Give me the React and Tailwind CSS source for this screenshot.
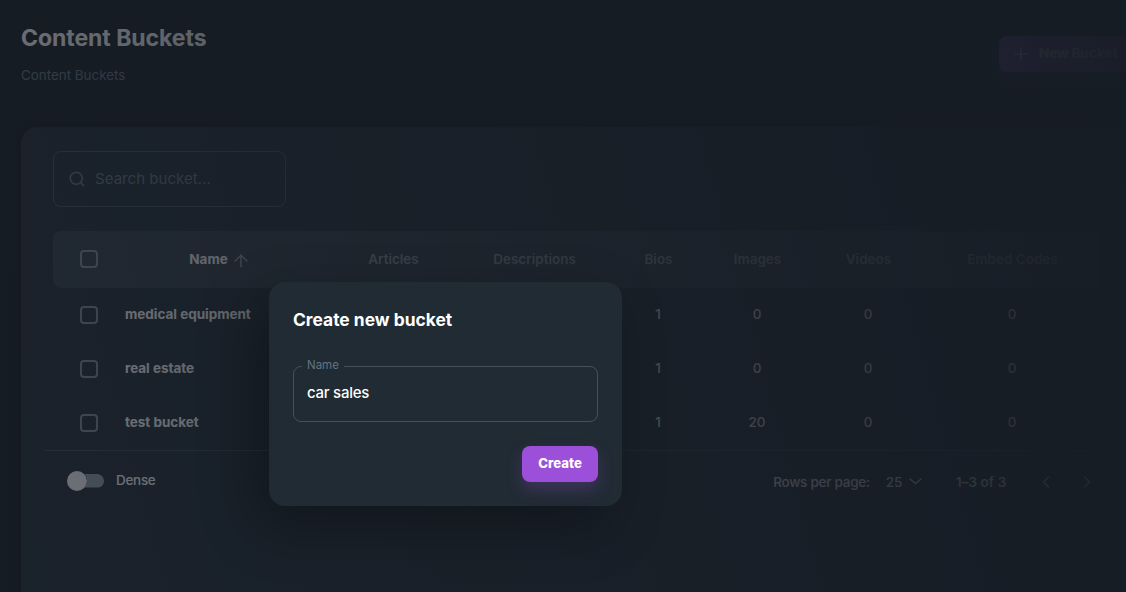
import { ArrowUp, ChevronLeft, ChevronRight, Plus, Search } from "lucide-react";

const columns = ["Articles", "Descriptions", "Bios", "Images", "Videos", "Embed Codes"];

const rows = [
  { name: "medical equipment", counts: [null, null, 1, 0, 0, 0] },
  { name: "real estate", counts: [null, null, 1, 0, 0, 0] },
  { name: "test bucket", counts: [null, null, 1, 20, 0, 0] },
];

const gridCols = "grid grid-cols-[56px_218px_132px_150px_98px_100px_122px_166px] items-center";

function Checkbox() {
  return <span className="block size-[18px] rounded-[4px] border-2 border-[#919eab]/85" />;
}

function PageHeader() {
  return (
    <header className="flex h-[127px] w-[1134px] justify-between pl-[21px]">
      <div className="pt-[20px]">
        <h1 className="text-[23px] leading-9 font-bold tracking-[-0.05px]">Content Buckets</h1>
        <p className="mt-[9px] text-[13.4px] leading-5 text-[#637381]">Content Buckets</p>
      </div>
      <button className="mt-9 flex h-9 w-[135px] items-center rounded-lg bg-[#9c4fd9] pb-px pl-3 text-[13.5px] font-extrabold shadow-[0_8px_16px_rgba(156,79,217,0.24)]">
        <Plus className="mt-px size-5" strokeWidth={2} />
        <span className="ml-2 tracking-[-0.1px] whitespace-nowrap">New Bucket</span>
      </button>
    </header>
  );
}

function BucketTable() {
  return (
    <div className="ml-8 w-[1048px]">
      <div className={`${gridCols} h-[57px] rounded-lg bg-[#333d48] text-center text-[13.5px] font-semibold text-[#919eab]`}>
        <span className="pb-px pl-[27px]">
          <Checkbox />
        </span>
        <span className="flex items-center justify-center gap-[3px] pl-1 font-bold text-white">
          Name
          <ArrowUp className="mt-0.5 size-5 text-[#919eab]" strokeWidth={1.8} />
        </span>
        {columns.map((column) => (
          <span key={column} className="pl-px">{column}</span>
        ))}
      </div>
      {rows.map((row) => (
        <div key={row.name} className={`${gridCols} h-[54px] text-center text-[13.5px] font-medium`}>
          <span className="pl-[27px]">
            <Checkbox />
          </span>
          <span className="pb-px pl-4 text-left font-bold tracking-[-0.02px]">{row.name}</span>
          {row.counts.map((count, i) => (
            <span key={columns[i]} className="pb-px">{count}</span>
          ))}
        </div>
      ))}
    </div>
  );
}

function TableFooter() {
  return (
    <div className="ml-[23px] flex h-[62px] w-[1064px] items-center border-t border-[#919eab]/25 pl-[23px] text-[13.5px] font-medium">
      <span className="mb-0.5 flex w-[37px] items-center">
        <span className="size-5 shrink-0 rounded-full bg-[#f4f6f8]" />
        <span className="-ml-2.5 h-3.5 w-[27px] shrink-0 rounded-r-full bg-[#919eab] [clip-path:path('M7.2_0H27V14H7.2A10_10_0_0_0_7.2_0Z')]" />
      </span>
      <span className="mb-0.5 ml-3 tracking-[-0.3px]">Dense</span>
      <div className="ml-auto flex items-center pt-0.5 pr-[11px] tracking-[-0.25px]">
        <span>Rows per page:</span>
        <span className="ml-[16px] pb-px">25</span>
        <svg className="mb-0.5 ml-[7px] h-[7px] w-[13px]" viewBox="0 0 13 7" fill="none" stroke="currentColor" strokeWidth="1.4" strokeLinecap="round" strokeLinejoin="round">
          <path d="M1 1l5.5 4.5L12 1" />
        </svg>
        <span className="ml-[34px] w-[52px] tracking-[0.05px] whitespace-nowrap">1–3 of 3</span>
        <ChevronLeft className="mb-px ml-[28px] size-5 opacity-80" strokeWidth={1.7} />
        <ChevronRight className="mb-px ml-[21px] size-5 opacity-80" strokeWidth={1.7} />
      </div>
    </div>
  );
}

function CreateDialog() {
  return (
    <div className="absolute top-[282px] left-[269px] flex h-[224px] w-[353px] flex-col rounded-2xl bg-[#212b34] px-6 pt-6 shadow-[-14px_20px_56px_rgba(0,0,0,0.3)]">
      <h2 className="text-[17.4px] leading-7 font-bold">Create new bucket</h2>
      <fieldset className="mt-[25px] h-[63px] rounded-lg border border-[#919eab]/32 px-[8px]">
        <legend className="px-[5px] pb-0.5 text-[11.5px] leading-3 text-[#637381]">Name</legend>
        <div className="pt-[8px] pl-[5px] text-[15px] leading-6 font-medium tracking-[-0.25px]">car sales</div>
      </fieldset>
      <button className="mt-6 ml-auto h-9 w-[76px] rounded-lg bg-[#9c4fd9] pb-px text-[13.2px] font-extrabold shadow-[0_8px_16px_rgba(156,79,217,0.24)]">
        Create
      </button>
    </div>
  );
}

export default function App() {
  return (
    <div className="relative h-[592px] w-[1126px] overflow-hidden bg-[#161c24] font-['Inter',sans-serif] text-white">
      <PageHeader />
      <main className="ml-[21px] h-[480px] w-[1113px] rounded-t-2xl bg-[#212b36] pt-6 shadow-[0_0_16px_rgba(0,0,0,0.3)]">
        <div className="mb-6 ml-8 flex h-14 w-[233px] items-center rounded-lg border border-[#919eab]/32 pl-[14px] text-[15.1px] text-[#637381]">
          <Search className="size-[18px]" strokeWidth={2.2} />
          <span className="ml-[9px]">Search bucket...</span>
        </div>
        <BucketTable />
        <TableFooter />
      </main>
      <div className="absolute -top-[90px] -left-[283px] h-[968px] w-[1456px] bg-[linear-gradient(75deg,rgba(22,28,36,0.48)_0%,rgb(22,28,36)_100%)]" />
      <CreateDialog />
    </div>
  );
}
